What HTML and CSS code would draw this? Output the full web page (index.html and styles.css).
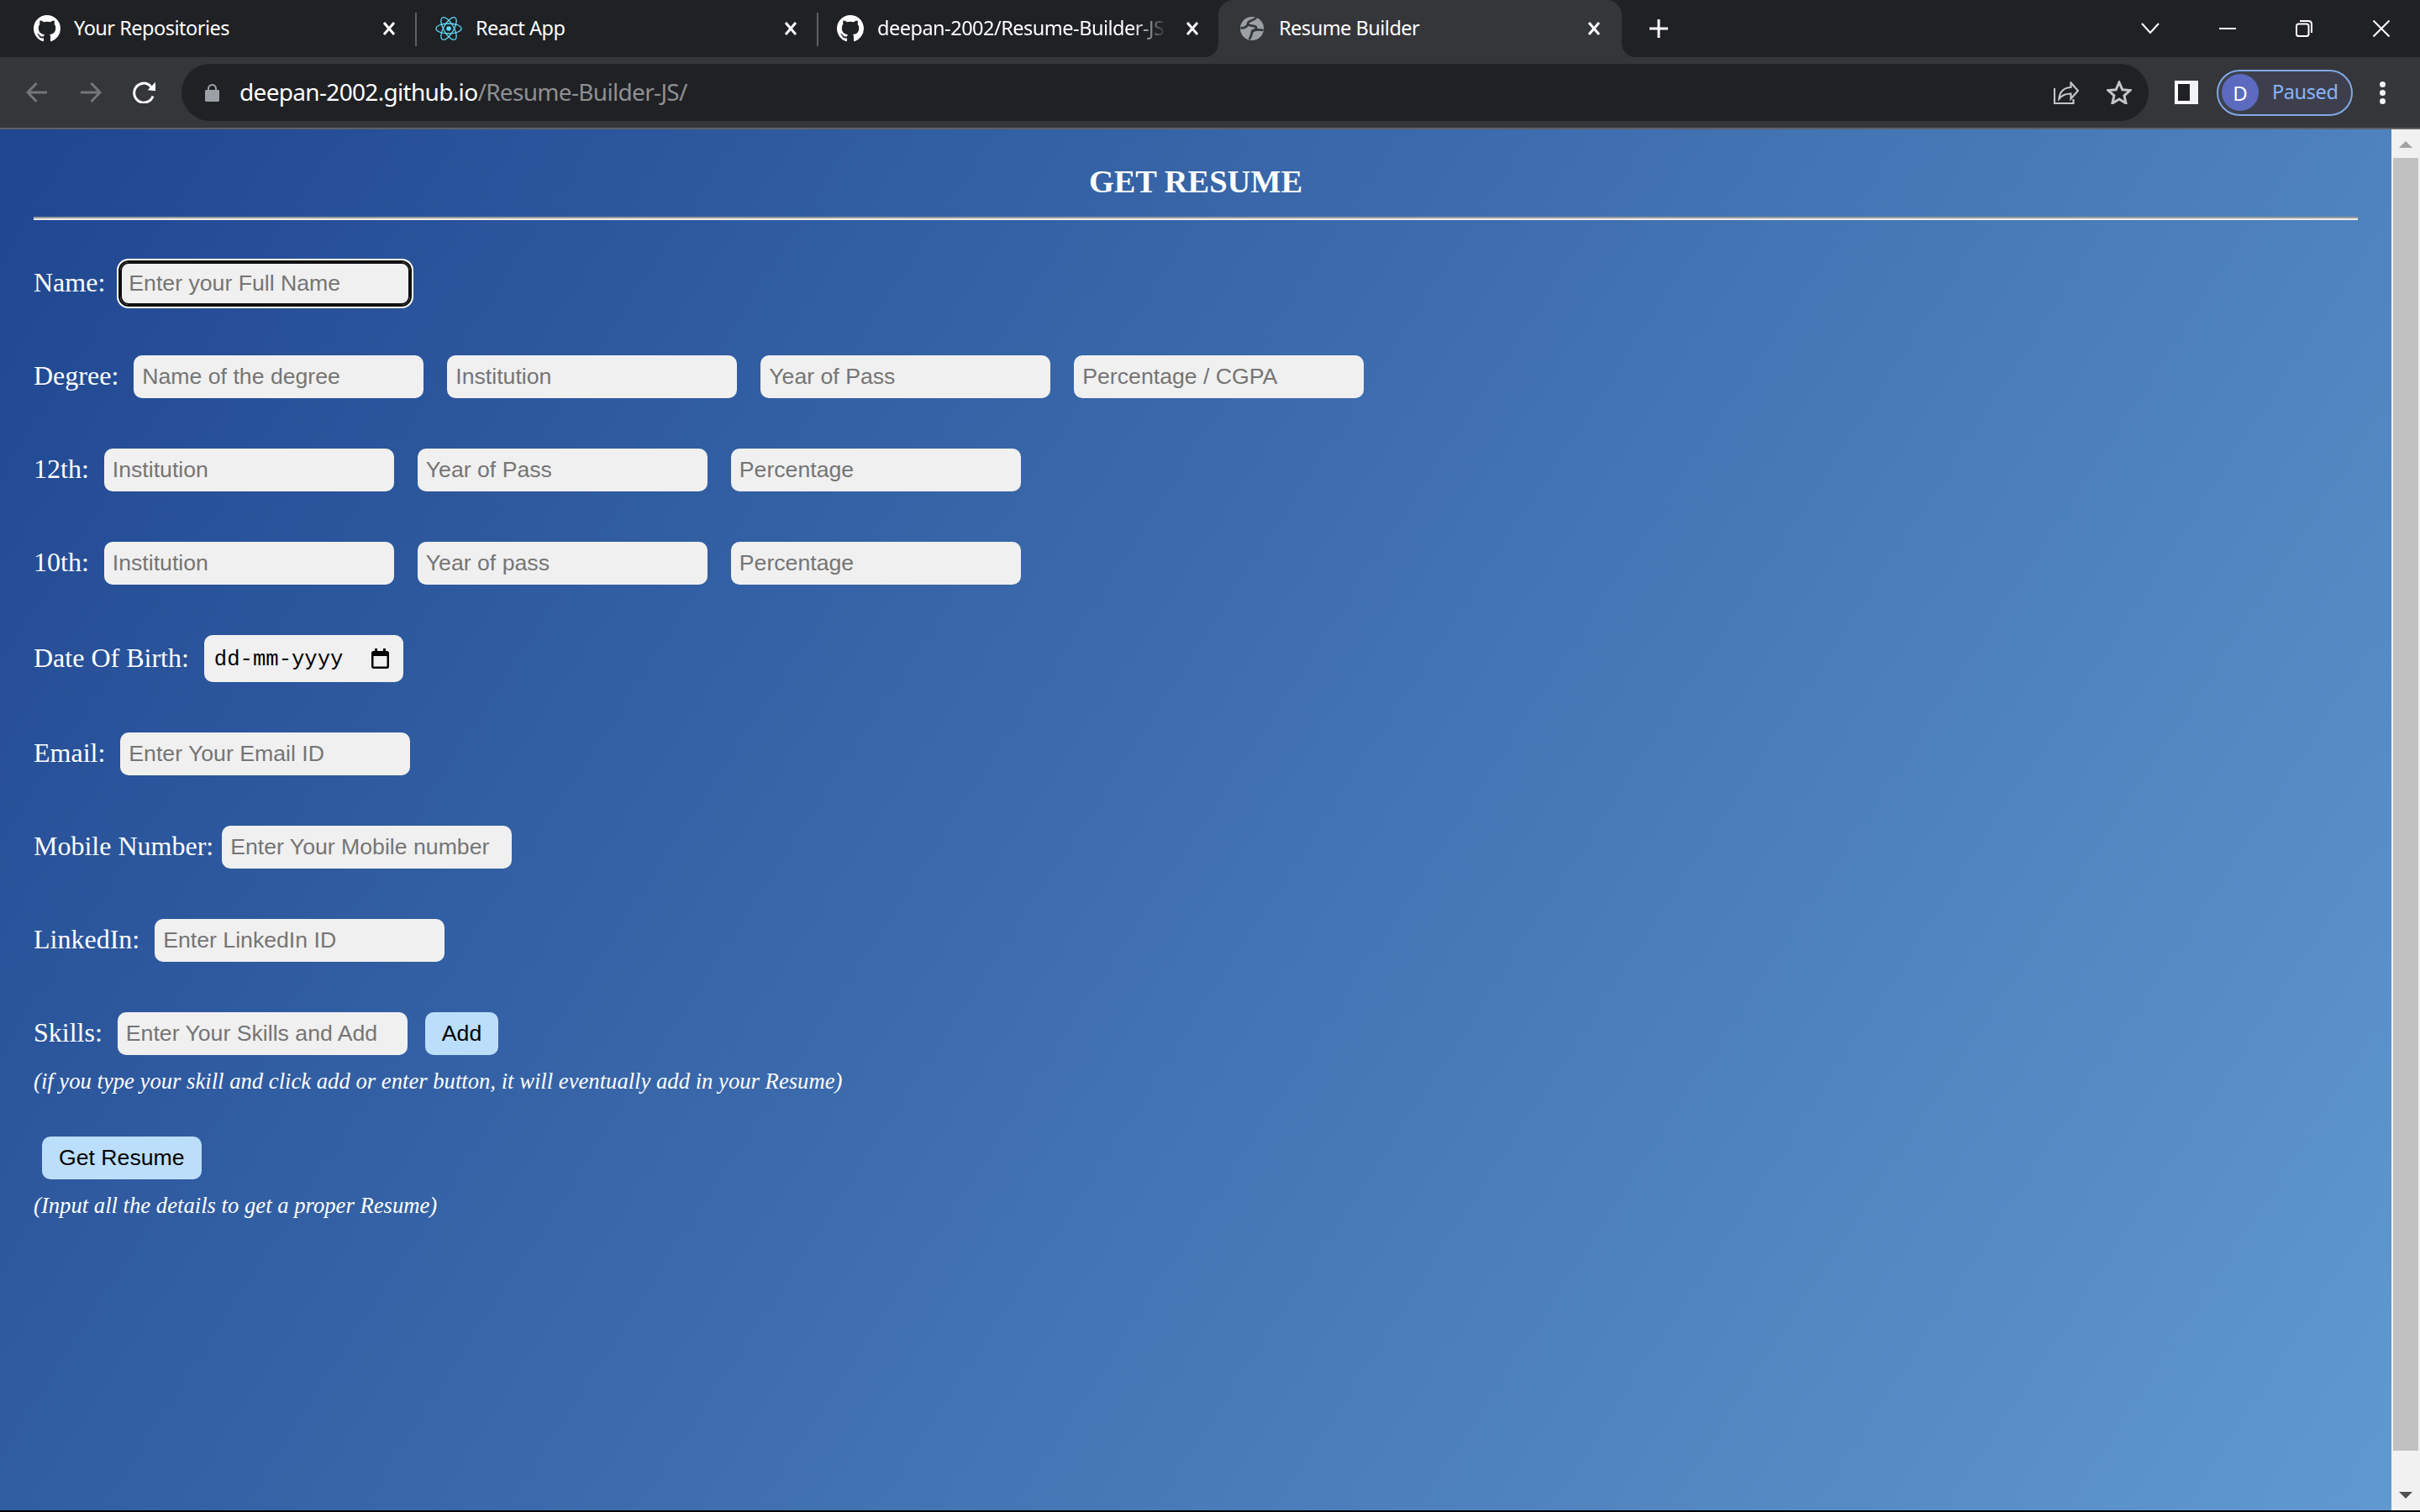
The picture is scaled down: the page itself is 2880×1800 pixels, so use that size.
FILE: index.html
```html
<!DOCTYPE html>
<html lang="en">
<head>
<meta charset="utf-8">
<title>Resume Builder</title>
<link rel="stylesheet" href="styles.css">
</head>
<body>
<header class="chrome">
  <div class="tabstrip">
    <div class="tab">
      <svg class="fav" viewBox="0 0 16 16"><path fill="#fff" d="M8 0C3.58 0 0 3.58 0 8c0 3.54 2.29 6.53 5.47 7.59.4.07.55-.17.55-.38 0-.19-.01-.82-.01-1.49-2.01.37-2.53-.49-2.69-.94-.09-.23-.48-.94-.82-1.13-.28-.15-.68-.52-.01-.53.63-.01 1.08.58 1.23.82.72 1.21 1.87.87 2.33.66.07-.52.28-.87.51-1.07-1.78-.2-3.64-.89-3.64-3.95 0-.87.31-1.59.82-2.15-.08-.2-.36-1.02.08-2.12 0 0 .67-.21 2.2.82.64-.18 1.32-.27 2-.27.68 0 1.36.09 2 .27 1.53-1.04 2.2-.82 2.2-.82.44 1.1.16 1.92.08 2.12.51.56.82 1.27.82 2.15 0 3.07-1.87 3.75-3.65 3.95.29.25.54.73.54 1.48 0 1.07-.01 1.93-.01 2.2 0 .21.15.46.55.38A8.013 8.013 0 0016 8c0-4.42-3.58-8-8-8z"/></svg>
      <span class="tab-title">Your Repositories</span>
      <svg class="tab-x" viewBox="0 0 16 16"><path d="M2 1l12 14M14 1L2 15"/></svg>
    </div>
    <div class="tab sep">
      <svg class="fav" viewBox="0 0 32 32" fill="none" stroke="#61dafb" stroke-width="1.3"><ellipse cx="16" cy="16" rx="15" ry="6"/><ellipse cx="16" cy="16" rx="15" ry="6" transform="rotate(60 16 16)"/><ellipse cx="16" cy="16" rx="15" ry="6" transform="rotate(120 16 16)"/><circle cx="16" cy="16" r="2.8" fill="#61dafb" stroke="none"/></svg>
      <span class="tab-title">React App</span>
      <svg class="tab-x" viewBox="0 0 16 16"><path d="M2 1l12 14M14 1L2 15"/></svg>
    </div>
    <div class="tab sep">
      <svg class="fav" viewBox="0 0 16 16"><path fill="#fff" d="M8 0C3.58 0 0 3.58 0 8c0 3.54 2.29 6.53 5.47 7.59.4.07.55-.17.55-.38 0-.19-.01-.82-.01-1.49-2.01.37-2.53-.49-2.69-.94-.09-.23-.48-.94-.82-1.13-.28-.15-.68-.52-.01-.53.63-.01 1.08.58 1.23.82.72 1.21 1.87.87 2.33.66.07-.52.28-.87.51-1.07-1.78-.2-3.64-.89-3.64-3.95 0-.87.31-1.59.82-2.15-.08-.2-.36-1.02.08-2.12 0 0 .67-.21 2.2.82.64-.18 1.32-.27 2-.27.68 0 1.36.09 2 .27 1.53-1.04 2.2-.82 2.2-.82.44 1.1.16 1.92.08 2.12.51.56.82 1.27.82 2.15 0 3.07-1.87 3.75-3.65 3.95.29.25.54.73.54 1.48 0 1.07-.01 1.93-.01 2.2 0 .21.15.46.55.38A8.013 8.013 0 0016 8c0-4.42-3.58-8-8-8z"/></svg>
      <span class="tab-title fade">deepan-2002/Resume-Builder-JS</span>
      <svg class="tab-x" viewBox="0 0 16 16"><path d="M2 1l12 14M14 1L2 15"/></svg>
    </div>
    <div class="tab active">
      <svg class="fav globe" viewBox="0 0 28 28"><circle cx="14" cy="14" r="14" fill="#9aa0a6"/><path fill="none" stroke="#35363a" stroke-width="2.8" d="M19 1C16 5 9 4 9 8.500C9 12 19 9 19 13C19 17 14 15 14 18C14 21 12 24 11 27M0.500 13C4 14 8 12 9 9M27.500 16C23 15 17 15 14 18"/></svg>
      <span class="tab-title">Resume Builder</span>
      <svg class="tab-x" viewBox="0 0 16 16"><path d="M2 1l12 14M14 1L2 15"/></svg>
    </div>
    <svg class="new-tab" viewBox="0 0 24 24"><path d="M12 1v22M1 12h22"/></svg>
    <div class="win-controls">
      <svg class="win chevron" viewBox="0 0 22 14"><path d="M1 1l10 11L21 1"/></svg>
      <svg class="win minimize" viewBox="0 0 22 20"><path d="M1 10h20"/></svg>
      <svg class="win restore" viewBox="0 0 20 20"><rect x="1" y="4.500" width="14.500" height="14.500" rx="2.500"/><path d="M5 1h10c2.500 0 4 1.500 4 4v10"/></svg>
      <svg class="win close" viewBox="0 0 20 20"><path d="M0.500 0.500l19 19M19.500 0.500l-19 19"/></svg>
    </div>
  </div>
  <div class="toolbar">
    <svg class="nav back" viewBox="0 0 26 26"><path d="M25 13H2M12.500 2L2 13l10.500 11"/></svg>
    <svg class="nav forward" viewBox="0 0 26 26"><path d="M1 13h23M13.500 2L24 13 13.500 24"/></svg>
    <svg class="reload" viewBox="0 0 28 26"><path d="M24 17.500A11.500 11.500 0 1 1 19.500 4L22 7"/><path class="solid" d="M27 0.700v10.600l-9.300-1z"/></svg>
    <div class="omnibox">
      <svg class="lock" viewBox="0 0 17 21"><path d="M0 8.500C0 7.700.7 7 1.500 7H3V5.500a5.500 5.500 0 0 1 11 0V7h1.500c.8 0 1.500.7 1.500 1.500v11c0 .8-.7 1.500-1.500 1.500h-14C.7 21 0 20.300 0 19.500zM5 7h7V5.500a3.500 3.500 0 0 0-7 0z"/></svg>
      <span class="url"><span class="url-host">deepan-2002.github.io</span>/Resume-Builder-JS/</span>
      <svg class="omni-icon share" viewBox="0 0 30 27"><path d="M1 8v18h22.500v-5M6.500 20.500C7 12 13 7 20.500 7V1.500L29 11l-8.500 9.500v-6C14 14.500 10 16 6.500 20.500z"/></svg>
      <svg class="omni-icon star" viewBox="0 0 30 28"><path d="M15 2l3.800 8.800 9.200.8-7 6.200 2.100 9.200-8.100-5-8.100 5L9 17.800 2 11.600l9.200-.8z"/></svg>
    </div>
    <div class="side-panel"><span class="side-panel-inner"></span></div>
    <div class="profile"><span class="avatar">D</span><span class="paused">Paused</span></div>
    <div class="menu-dots"><i></i><i></i><i></i></div>
  </div>
</header>
<div class="viewport">
  <main class="page">
    <h1 class="title">GET RESUME</h1>
    <hr class="rule">
    <form class="form">
      <div class="row"><label class="label">Name:</label><input class="field focused" placeholder="Enter your Full Name"></div>
      <div class="row"><label class="label">Degree:</label><input class="field" placeholder="Name of the degree"><input class="field" placeholder="Institution"><input class="field" placeholder="Year of Pass"><input class="field" placeholder="Percentage / CGPA"></div>
      <div class="row"><label class="label">12th:</label><input class="field" placeholder="Institution"><input class="field" placeholder="Year of Pass"><input class="field" placeholder="Percentage"></div>
      <div class="row"><label class="label">10th:</label><input class="field" placeholder="Institution"><input class="field" placeholder="Year of pass"><input class="field" placeholder="Percentage"></div>
      <div class="row"><label class="label">Date Of Birth:</label>
        <div class="date-field"><span class="date-text">dd-mm-yyyy</span><svg class="cal" viewBox="0 0 21 24"><path d="M4 0h3v3h7V0h3v3h1.500C20 3 21 4 21 5.500v16c0 1.500-1 2.500-2.500 2.500h-16C1 24 0 23 0 21.500v-16C0 4 1 3 2.500 3H4zM2.500 9v12.500h16V9z"/></svg></div>
      </div>
      <div class="row"><label class="label">Email:</label><input class="field" placeholder="Enter Your Email ID"></div>
      <div class="row"><label class="label label-tight">Mobile Number:</label><input class="field" placeholder="Enter Your Mobile number"></div>
      <div class="row"><label class="label">LinkedIn:</label><input class="field" placeholder="Enter LinkedIn ID"></div>
      <div class="row row-skills"><label class="label">Skills:</label><input class="field" placeholder="Enter Your Skills and Add"><button type="button" class="btn">Add</button></div>
      <p class="note note-skills">(if you type your skill and click add or enter button, it will eventually add in your Resume)</p>
      <div class="row row-submit"><button type="button" class="btn">Get Resume</button></div>
      <p class="note">(Input all the details to get a proper Resume)</p>
    </form>
  </main>
  <aside class="scrollbar">
    <span class="arrow-up"></span>
    <span class="thumb"></span>
    <span class="arrow-down"></span>
  </aside>
</div>
<div class="bottom-line"></div>
</body>
</html>
```

FILE: styles.css
```css
* { box-sizing: border-box; }
html, body { margin: 0; height: 100%; }
body { display: flex; flex-direction: column; height: 1800px; overflow: hidden; background: #000; font-family: "Liberation Serif", serif; }

.chrome { flex: none; }
.tabstrip { height: 68px; background: #202124; display: flex; align-items: stretch; padding-left: 16px; position: relative; }
.tab { width: 478px; flex: none; display: flex; align-items: center; padding: 0 23px 0 24px; color: #fff; position: relative; font: 23.5px "Noto Sans", sans-serif; }
.tab.sep::before { content: ""; position: absolute; left: 0; top: 15px; width: 2px; height: 40px; background: #5f6063; }
.tab.active { width: 480px; padding-right: 25px; background: #35363a; border-radius: 18px 18px 0 0; }
.tab.active::before, .tab.active::after { content: ""; position: absolute; bottom: 0; width: 16px; height: 16px; }
.tab.active::before { left: -16px; background: radial-gradient(circle at 0 0, #202124 15.5px, #35363a 16px); }
.tab.active::after { right: -16px; background: radial-gradient(circle at 100% 0, #202124 15.5px, #35363a 16px); }
.fav { width: 32px; height: 32px; flex: none; }
.globe { width: 28px; height: 28px; margin: 0 2px; }
.tab-title { flex: 1; margin: -3px 0 0 16px; white-space: nowrap; overflow: hidden; letter-spacing: -0.5px; }
.tab-title.fade { margin-right: 22px; -webkit-mask-image: linear-gradient(to right, #000 88%, transparent 100%); mask-image: linear-gradient(to right, #000 88%, transparent 100%); }
.tab-x { width: 16px; height: 16px; flex: none; fill: none; stroke: #fff; stroke-width: 3; }
.new-tab { width: 24px; height: 24px; margin: 22px 0 0 32px; fill: none; stroke: #fff; stroke-width: 3; }
.win-controls { margin-left: auto; display: flex; align-items: center; padding-right: 36px; }
.win { fill: none; stroke: #fff; stroke-width: 2; flex: none; }
.chevron { width: 22px; height: 14px; }
.minimize { width: 22px; height: 20px; margin-left: 70px; }
.restore { width: 20px; height: 20px; margin-left: 70px; }
.close { width: 20px; height: 20px; margin-left: 72px; }

.toolbar { height: 84px; background: #35363a; display: flex; align-items: center; padding-left: 31px; position: relative; }
.nav { width: 26px; height: 26px; flex: none; fill: none; stroke: #75767a; stroke-width: 3; }
.forward { margin-left: 38px; }
.reload { width: 28px; height: 26px; margin-left: 37px; flex: none; fill: none; stroke: #fff; stroke-width: 3; }
.reload .solid { fill: #fff; stroke: none; }
.omnibox { width: 2341px; height: 68px; margin-left: 30px; background: #202124; border-radius: 34px; display: flex; align-items: center; padding-left: 28px; flex: none; }
.lock { width: 17px; height: 21px; fill: #9aa0a6; flex: none; }
.url { font: 28px "Noto Sans", sans-serif; color: #8f9093; margin: -2px 0 0 24px; white-space: nowrap; letter-spacing: -0.68px; flex: 1; }
.url-host { color: #fff; }
.omni-icon { fill: none; stroke: #c4c5c6; stroke-width: 2.2; flex: none; }
.share { width: 30px; height: 27px; }
.star { width: 30px; height: 28px; margin-left: 33px; margin-right: 20px; stroke-width: 3; }
.side-panel { width: 28px; height: 28px; margin-left: 31px; background: linear-gradient(to right, #fff 18px, #f1f3f4 18px); flex: none; padding: 4px 0 4px 4px; }
.side-panel-inner { display: block; width: 14px; height: 20px; background: #202124; }
.profile { width: 162px; height: 55px; margin-left: 22px; border: 2px solid #7fa8e6; border-radius: 28px; background: #3d404c; display: flex; align-items: center; padding-left: 4px; flex: none; }
.avatar { width: 44px; height: 44px; border-radius: 50%; background: #5c6bc0; color: #fff; display: flex; align-items: center; justify-content: center; font: 24px "Noto Sans", sans-serif; }
.paused { color: #8ab4f8; font: 23.5px "Noto Sans", sans-serif; margin: -2px 0 0 16px; letter-spacing: -0.4px; }
.menu-dots { margin-left: 32px; display: flex; flex-direction: column; gap: 3px; flex: none; }
.menu-dots i { display: block; width: 7px; height: 7px; border-radius: 50%; background: #f1f3f4; }

.viewport { flex: 1; display: flex; min-height: 0; border-top: 2px solid #5f6063; }
.page { flex: 1; min-width: 0; padding: 0 40px; color: #fff; background: linear-gradient(123deg, #1f4690 0%, #6099d0 100%); }
.title { margin: 0; padding-top: 39px; height: 104px; font-size: 38.4px; line-height: 46px; font-weight: bold; text-align: center; }
.rule { margin: 0 0 50px; height: 4px; border: 0; border-top: 2px solid #9a9a9a; border-bottom: 2px solid #eee; }

.form { display: block; }
.row { display: flex; align-items: center; margin-bottom: 60px; }
.row-skills { margin-bottom: 15px; }
.row-submit { margin-bottom: 15px; padding-left: 10px; }
.label { font-size: 32px; margin: -2px 18px 0 0; white-space: nowrap; }
.label-tight { margin-right: 10px; }
.field { width: 345px; height: 51px; border: 0; border-radius: 10px; background: #f0f0f0; padding: 0 10px; font: 26.67px "Liberation Sans", sans-serif; color: #000; flex: none; outline: none; }
.field + .field { margin-left: 28px; }
.field::placeholder { color: #757575; opacity: 1; }
.field.focused { box-shadow: inset 0 0 0 2px #101010, 0 0 0 2px #101010, 0 0 0 4px #fff; }
.date-field { width: 237px; height: 56px; border-radius: 10px; background: #f0f0f0; padding: 2px 17px 0 12px; display: flex; align-items: center; justify-content: space-between; }
.date-text { font: 25.6px "Liberation Mono", monospace; color: #000; white-space: nowrap; }
.cal { width: 21px; height: 24px; margin-top: -2px; fill: #000; flex: none; }
.btn { height: 51px; border: 0; border-radius: 10px; background: #bbdefb; color: #000; padding: 0 20px; font: 26.67px "Liberation Sans", sans-serif; flex: none; }
.field + .btn { margin-left: 21px; }
.note { margin: 0; font-size: 26.67px; line-height: 32px; font-style: italic; }
.note-skills { margin-bottom: 50px; }

.scrollbar { width: 34px; flex: none; background: #f1f1f1; display: flex; flex-direction: column; align-items: center; padding: 14px 2px; }
.arrow-up { flex: none; width: 0; height: 0; border-left: 8px solid transparent; border-right: 8px solid transparent; border-bottom: 8px solid #a3a3a3; }
.thumb { flex: none; width: 30px; height: 1539px; margin-top: 12px; background: #c1c1c1; }
.arrow-down { flex: none; width: 0; height: 0; margin-top: auto; border-left: 8px solid transparent; border-right: 8px solid transparent; border-top: 8px solid #505050; }
.bottom-line { height: 2px; background: #000; flex: none; }
```
